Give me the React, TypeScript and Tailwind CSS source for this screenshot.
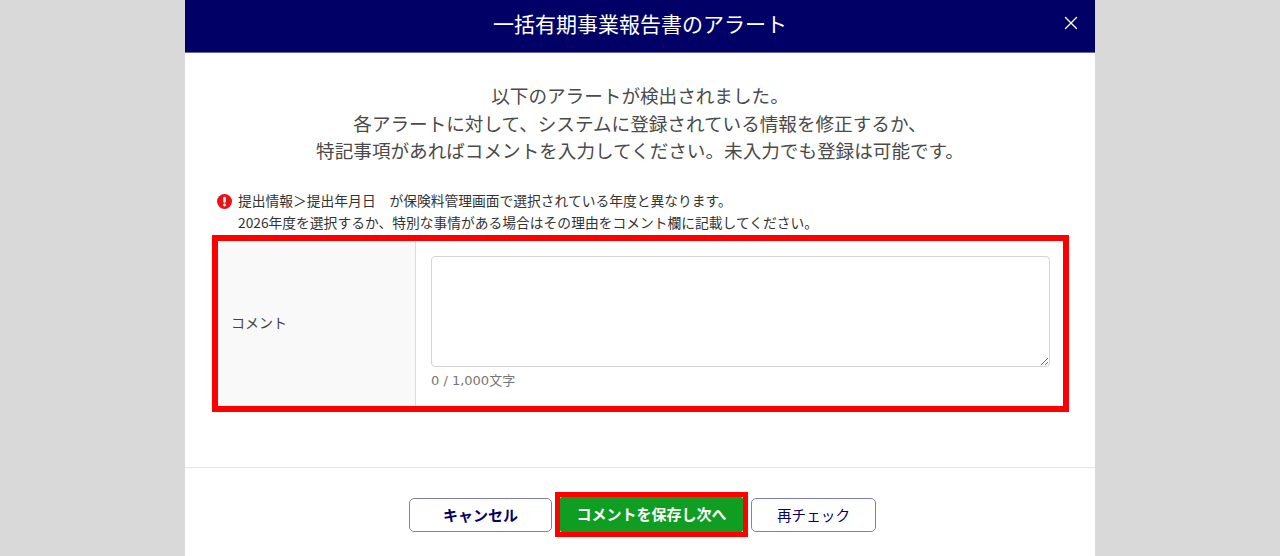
import React from 'react';
import { X } from 'lucide-react';

const FONT = 'font-["Noto_Sans_CJK_JP","Liberation_Sans",sans-serif]';

const AlertIcon: React.FC = () => (
  <svg width="15" height="15" viewBox="0 0 15 15" className="shrink-0">
    <circle cx="7.5" cy="7.5" r="7.5" fill="#ee0f14" />
    <rect x="6.2" y="2.8" width="2.6" height="6" rx="1.2" fill="#fff" />
    <circle cx="7.5" cy="11" r="1.4" fill="#fff" />
  </svg>
);

const App: React.FC = () => {
  return (
    <div className={`${FONT} h-[556px] w-[1280px] overflow-hidden bg-[#d9d9d9] flex justify-center`}>
      <div className="w-[910px] h-full bg-white flex flex-col">
        {/* Header */}
        <div className="h-[53px] shrink-0 grid grid-cols-[1fr_auto_1fr] items-center bg-[#000066] border-b border-[#6666a8] pb-[6px] text-white">
          <div />
          <h1 className="text-[21px] leading-none font-normal">一括有期事業報告書のアラート</h1>
          <X size={22} strokeWidth={1.5} className="justify-self-end mr-[13px]" />
        </div>

        {/* Message */}
        <div className="pt-[28px] text-center text-[18.6px] leading-[27.6px] text-[#4a4a4a]">
          <p>以下のアラートが検出されました。</p>
          <p>各アラートに対して、システムに登録されている情報を修正するか、</p>
          <p>特記事項があればコメントを入力してください。未入力でも登録は可能です。</p>
        </div>

        {/* Alert */}
        <div className="mt-[25px] pl-[32px] flex gap-[6px] text-[13.77px] leading-[22px] text-[#333]">
          <div className="pt-[5px]"><AlertIcon /></div>
          <div>
            <p>提出情報＞提出年月日　が保険料管理画面で選択されている年度と異なります。</p>
            <p>2026年度を選択するか、特別な事情がある場合はその理由をコメント欄に記載してください。</p>
          </div>
        </div>

        {/* Comment table */}
        <div className="mt-[2px] ml-[27px] w-[857px] h-[177px] border-[6px] border-[#ff0000] flex">
          <div className="w-[198px] bg-[#f9f9f9] border-r border-[#dcdcdc] flex items-center pl-[13px] pb-[2px] text-[14px] text-[#444]">
            コメント
          </div>
          <div className="flex-1 pl-[15px] pr-[13px] pt-[15px]">
            <textarea className="block w-full h-[111px] border border-[#d4d4d4] rounded-[4px] bg-white" />
            <p className={`mt-[6px] text-[13px] leading-[16px] text-[#777] font-["DejaVu_Sans","Noto_Sans_CJK_JP",sans-serif]`}>0 / 1,000文字</p>
          </div>
        </div>

        {/* Footer */}
        <div className="mt-[55px] border-t border-[#e5e5e5] pt-[24px] flex justify-center items-center pl-[5px]">
          <button className="w-[143px] h-[34px] mt-[1px] mr-[3px] rounded-[5px] border border-[#7f7fb8] bg-white text-[15px] font-bold text-[#000066]">
            キャンセル
          </button>
          <div className="border-[5px] border-[#ff0000]">
            <button className="block w-[183px] h-[35px] rounded-[2px] bg-[#0f9d22] text-[15px] font-bold text-white">
              コメントを保存し次へ
            </button>
          </div>
          <button className="w-[125px] h-[34px] mt-[1px] ml-[3px] rounded-[5px] border border-[#7f7fb8] bg-white text-[14.6px] text-[#000066]">
            再チェック
          </button>
        </div>
      </div>
    </div>
  );
};

export default App;
